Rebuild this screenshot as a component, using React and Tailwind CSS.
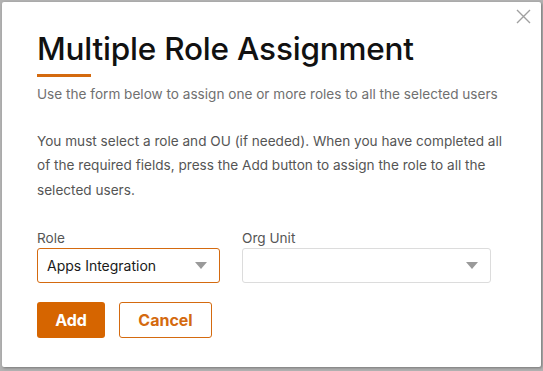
import React from "react";

const Caret = () => (
  <svg width="12" height="7" viewBox="0 0 12 7" className="shrink-0">
    <path d="M0 0 L12 0 L6 7 Z" fill="#9a9a9a" />
  </svg>
);

const SelectBox = ({ value, active, className }) => (
  <div
    className={`h-[35px] flex items-center justify-between pl-[9px] pr-[12px] rounded-[3px] border bg-white ${
      active ? "border-[#d46a0f]" : "border-[#dcdcdc]"
    } ${className}`}
  >
    <span className="text-[14px] text-[#1a1a1a]">{value}</span>
    <Caret />
  </div>
);

export default function App() {
  return (
    <div
      className="w-[543px] h-[371px] bg-[#b3b3b3] pl-[2px] pt-[2px] overflow-hidden"
      style={{ fontFamily: "Inter, 'Noto Sans', sans-serif" }}
    >
      <div className="relative w-[539px] h-[365px] bg-white rounded-[2px] shadow-[1px_1px_3px_rgba(0,0,0,0.35)] pl-[35px] pt-[27px]">
        <button className="absolute right-[10px] top-[7px] w-[15px] h-[15px]">
          <svg width="15" height="15" viewBox="0 0 15 15">
            <path d="M1 1 L14 14 M14 1 L1 14" stroke="#a0a0a0" strokeWidth="1.4" />
          </svg>
        </button>

        <h1 className="text-[31.5px] leading-[40px] font-medium text-[#111] tracking-[-0.2px]">
          Multiple Role Assignment
        </h1>
        <div className="w-[54px] h-[2.5px] bg-[#d46a0f] mt-[5px]" />
        <p className="mt-[7px] text-[13.6px] leading-[20px] text-[#707070]">
          Use the form below to assign one or more roles to all the selected users
        </p>

        <p className="mt-[25px] w-[475px] text-[13.6px] leading-[24.5px] text-[#555]">
          You must select a role and OU (if needed). When you have completed all
          of the required fields, press the Add button to assign the role to all
          the selected users.
        </p>

        <div className="mt-[26px] flex gap-[22px]">
          <div className="flex flex-col">
            <label className="text-[13.6px] leading-[20px] text-[#555]">Role</label>
            <SelectBox value="Apps Integration" active className="w-[183px]" />
          </div>
          <div className="flex flex-col">
            <label className="text-[13.6px] leading-[20px] text-[#555]">Org Unit</label>
            <SelectBox value="" className="w-[249px]" />
          </div>
        </div>

        <div className="mt-[19px] flex gap-[14px]">
          <button className="w-[68px] h-[36px] rounded-[3px] bg-[#d66500] text-white text-[16px] font-bold">
            Add
          </button>
          <button className="w-[93px] h-[36px] rounded-[3px] border border-[#d46a0f] bg-white text-[#d46a0f] text-[16px] font-bold">
            Cancel
          </button>
        </div>
      </div>
    </div>
  );
}
